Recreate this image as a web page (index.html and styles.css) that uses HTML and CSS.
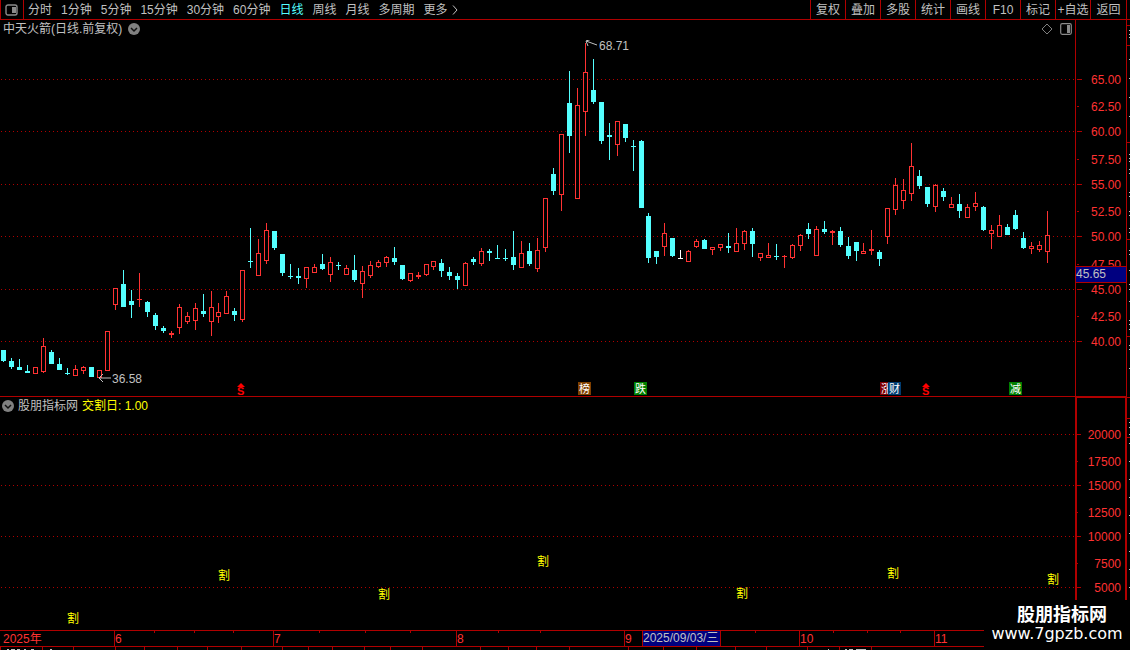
FILE: index.html
```html
<!DOCTYPE html>
<html lang="zh-CN">
<head>
    <meta charset="UTF-8">
    <meta name="viewport" content="width=device-width, initial-scale=1.0">
    <title>中天火箭 日线</title>
    <link rel="stylesheet" href="styles.css">
</head>
<body>
    <nav class="toolbar">
        <button class="layout-btn" aria-label="布局">
            <svg width="14" height="12" viewBox="0 0 14 12">
                <rect x="1" y="1" width="11" height="10" rx="2" fill="none" stroke="#8a8a8a" stroke-width="1.4"/>
                <rect x="7" y="3" width="4" height="6" fill="#8a8a8a"/>
            </svg>
        </button>
        <div class="periods">
            <button>分时</button>
            <button>1分钟</button>
            <button>5分钟</button>
            <button>15分钟</button>
            <button>30分钟</button>
            <button>60分钟</button>
            <button class="active">日线</button>
            <button>周线</button>
            <button>月线</button>
            <button>多周期</button>
            <button class="more">更多
                <svg width="6" height="10" viewBox="0 0 6 10"><path d="M1 0.5 L5 5 L1 9.5" fill="none" stroke="#c0c0c0"/></svg>
            </button>
        </div>
        <div class="tools">
            <button>复权</button>
            <button>叠加</button>
            <button>多股</button>
            <button>统计</button>
            <button>画线</button>
            <button>F10</button>
            <button>标记</button>
            <button>+自选</button>
            <button>返回</button>
        </div>
    </nav>

    <main class="workspace">
        <section class="panel price-panel">
            <div class="panel-title">
                <span>中天火箭(日线.前复权)</span>
                <button class="icon-btn" aria-label="展开">
                    <svg width="12" height="12" viewBox="0 0 12 12">
                        <circle cx="6" cy="6" r="6" fill="#808080"/>
                        <path d="M3 5 L6 8 L9 5" fill="none" stroke="#101010" stroke-width="1.5"/>
                    </svg>
                </button>
                <span class="panel-icons">
                    <svg width="12" height="12" viewBox="0 0 12 12"><path d="M6 1 L11 6 L6 11 L1 6 Z" fill="none" stroke="#808080"/></svg>
                    <svg width="12" height="12" viewBox="0 0 12 12">
                        <rect x="0.7" y="0.7" width="10.6" height="10.6" rx="1.5" fill="none" stroke="#8a8a8a" stroke-width="1.2"/>
                        <rect x="7" y="2" width="3" height="8" fill="#8a8a8a"/>
                    </svg>
                </span>
            </div>
            <svg class="chart" id="price-chart"></svg>
        </section>
        <svg class="axis" id="price-axis"></svg>

        <section class="panel signal-panel">
            <div class="panel-title">
                <button class="icon-btn" aria-label="展开">
                    <svg width="12" height="12" viewBox="0 0 12 12">
                        <circle cx="6" cy="6" r="6" fill="#808080"/>
                        <path d="M3 5 L6 8 L9 5" fill="none" stroke="#101010" stroke-width="1.5"/>
                    </svg>
                </button>
                <span>股朋指标网</span>
                <span class="signal-value">交割日: 1.00</span>
            </div>
            <svg class="chart" id="signal-chart"></svg>
        </section>
        <svg class="axis signal-axis" id="signal-axis"></svg>

        <svg class="dates" id="date-axis"></svg>
        <svg class="edge" id="edge"></svg>
    </main>

    <div class="watermark">
        <strong>股朋指标网</strong>
        <span>www.7gpzb.com</span>
    </div>

    <script>
        // Candle rows: high, body top, body bottom, low, type (u = up, d = down, f = flat)
        const candles = [
            [350,350,361,362,'d'],[358,361,367,369,'d'],[359,367,370,370,'d'],[365,371,373,373,'d'],
            [367,367,374,374,'u'],[338,346,372,373,'u'],[350,352,364,364,'d'],[358,364,370,370,'d'],
            [368,373,374,375,'d'],[365,369,376,376,'u'],[366,367,371,374,'u'],[367,367,377,377,'d'],
            [370,370,378,378,'u'],[331,331,371,371,'u'],[288,288,305,310,'u'],[270,284,307,307,'d'],
            [290,301,305,318,'d'],[273,299,300,307,'u'],[301,302,312,317,'d'],[313,315,326,330,'d'],
            [326,328,331,333,'d'],[331,333,335,338,'u'],[304,307,328,334,'u'],[312,316,322,324,'u'],
            [303,308,321,330,'u'],[294,311,314,317,'d'],[291,307,322,336,'u'],[303,312,317,323,'u'],
            [291,296,314,314,'u'],[308,311,315,321,'d'],[270,270,320,322,'u'],[228,261,262,268,'d'],
            [239,253,276,276,'u'],[223,230,261,264,'u'],[231,231,248,250,'d'],[254,254,273,276,'d'],
            [264,276,277,279,'d'],[268,276,278,284,'d'],[267,267,279,288,'u'],[264,267,273,273,'u'],
            [254,264,269,270,'d'],[257,262,275,282,'u'],[262,265,266,270,'d'],[265,268,275,275,'u'],
            [255,270,280,282,'d'],[266,271,284,298,'u'],[261,265,276,278,'u'],[260,262,267,268,'u'],
            [256,257,263,267,'u'],[247,258,262,265,'d'],[265,265,279,280,'d'],[273,273,281,282,'u'],
            [272,275,277,279,'u'],[264,264,275,276,'u'],[261,261,267,270,'u'],[259,263,271,277,'d'],
            [267,272,276,280,'d'],[273,276,280,289,'d'],[262,263,286,286,'u'],[257,259,262,265,'d'],
            [248,251,264,266,'u'],[249,251,253,261,'d'],[245,258,259,259,'d'],[249,258,259,261,'d'],
            [231,257,265,270,'d'],[241,253,268,268,'u'],[243,251,264,266,'d'],[238,250,269,272,'u'],
            [198,198,248,252,'u'],[168,174,191,195,'d'],[134,134,195,211,'u'],[71,103,136,153,'d'],
            [88,105,199,199,'u'],[43,72,112,136,'u'],[59,90,102,104,'d'],[102,102,141,144,'d'],
            [123,135,137,160,'d'],[121,121,145,156,'u'],[124,124,138,142,'d'],[140,146,147,171,'d'],
            [140,141,208,208,'d'],[213,216,258,263,'d'],[251,251,257,264,'d'],[223,233,247,256,'u'],
            [238,238,256,257,'d'],[250,258,259,259,'f'],[250,251,262,262,'u'],[239,241,247,248,'u'],
            [239,240,249,249,'d'],[247,247,250,255,'u'],[244,244,248,251,'u'],[233,246,248,253,'d'],
            [228,243,252,252,'u'],[230,231,244,250,'u'],[228,231,244,257,'d'],[253,253,258,261,'u'],
            [243,255,258,258,'u'],[244,256,257,260,'d'],[255,256,257,268,'u'],[244,245,258,259,'u'],
            [234,235,246,251,'u'],[223,229,234,239,'d'],[226,229,256,256,'u'],[221,229,232,234,'d'],
            [230,231,233,245,'u'],[227,231,245,247,'d'],[237,246,256,259,'d'],[242,242,251,261,'d'],
            [243,251,254,254,'u'],[230,249,251,255,'u'],[250,252,259,266,'d'],[208,208,237,244,'u'],
            [178,185,210,215,'u'],[179,190,201,209,'u'],[143,166,194,201,'u'],[170,176,186,189,'d'],
            [187,187,204,207,'d'],[184,185,207,212,'u'],[188,191,197,201,'d'],[197,204,208,208,'u'],
            [194,204,211,218,'d'],[204,207,218,218,'u'],[192,203,207,211,'u'],[206,207,230,231,'d'],
            [225,230,234,249,'u'],[215,225,237,237,'u'],[224,227,235,235,'d'],[210,215,229,230,'d'],
            [232,238,248,249,'d'],[242,246,249,254,'u'],[241,245,250,252,'u'],[211,235,252,263,'u']
        ];

        const colors = { u: '#ff3232', d: '#54ffff', f: '#ffffff' };

        const rect = (x, y, w, h, fill) =>
            `<rect x="${x}" y="${y}" width="${w}" height="${h}" fill="${fill}"/>`;
        const text = (x, y, str, cls) => `<text x="${x}" y="${y}" class="${cls}">${str}</text>`;

        // Dotted grid lines
        function grid(rows, id) {
            let out = `<defs><pattern id="${id}" width="4" height="1" patternUnits="userSpaceOnUse">${rect(1, 0, 1, 1, '#b00000')}</pattern></defs>`;
            rows.forEach(y => out += `<rect x="0" y="${y}" width="100%" height="1" fill="url(#${id})"/>`);
            return out;
        }

        function candle(row, i) {
            const [high, top, bottom, low, type] = row;
            const x = 1 + i * 8 - Math.floor(i / 27);
            const c = colors[type];
            let out = rect(x + 2, high, 1, low - high, c);
            out += rect(x, top, 5, bottom - top, c);
            if (type === 'u' && bottom - top > 2) {
                out += rect(x + 1, top + 1, 3, bottom - top - 2, '#000');
            }
            return out;
        }

        function badge(x, str, fill) {
            return rect(x, 382, 13, 13, fill) + text(x + 1, 393, str, 'badge');
        }

        function dividend(x) {
            return `<path d="M${x} 387 l4 -4 l4 4 z" fill="#f00"/>` + text(x, 395, 'S', 'dividend');
        }

        function put(id, top, content) {
            document.getElementById(id).innerHTML = `<g transform="translate(0 ${-top})">${content}</g>`;
        }

        // Price chart
        put('price-chart', 40,
            grid([79, 131, 184, 236, 289, 341], 'dots-a') +
            candles.map(candle).join('') +
            '<path d="M597 45 L586 41 M592 39 L586 41 L588 46" class="arrow"/>' + text(599, 50, '68.71', 'note') +
            '<path d="M111 378 L99 378 M103 374 L99 378 L103 382" class="arrow"/>' + text(112, 383, '36.58', 'note') +
            dividend(237) + badge(578, '榜', '#804000') + badge(634, '跌', '#008000') +
            badge(880, '涨', '#800000') + badge(888, '财', '#003c70') + dividend(922) + badge(1009, '减', '#008000')
        );

        // Price axis
        const prices = [['65.00', 79], ['62.50', 106], ['60.00', 131], ['57.50', 159], ['55.00', 184],
            ['52.50', 211], ['50.00', 236], ['47.50', 264], ['45.00', 289], ['42.50', 316], ['40.00', 341]];
        put('price-axis', 20,
            prices.map((p, i) => rect(1, p[1], i % 2 ? 2 : 5, 1, '#b00000') + text(45, p[1] + 5, p[0], 'tick')).join('') +
            rect(0, 266, 51, 17, '#b00000') + rect(0, 267, 50, 15, '#000080') + text(0, 278, '45.65', 'note')
        );

        // Settlement signals
        const signals = [[67, 618], [218, 575], [378, 594], [537, 561], [736, 593], [887, 573], [1047, 579]];
        put('signal-chart', 415,
            grid([434, 485, 536, 587], 'dots-b') +
            signals.map(s => text(s[0], s[1] + 5, '割', 'signal')).join('')
        );

        const levels = [['20000', 434], ['17500', 461], ['15000', 485], ['12500', 512], ['10000', 536], ['7500', 563], ['5000', 587]];
        put('signal-axis', 398,
            levels.map((p, i) => rect(0, p[1], i % 2 ? 1 : 4, 1, '#b00000') + text(44, p[1] + 5, p[0], 'tick')).join('')
        );

        // Date axis
        const months = [[114, '6'], [273, '7'], [456, '8'], [624, '9'], [799, '10'], [934, '11']];
        const weeks = [154, 194, 233, 319, 365, 410, 498, 540, 755, 833, 867, 900];
        const cells = [0, 42, 73, 115, 144, 177, 207, 241, 282, 308, 332, 364, 390, 422, 480, 508, 536, 569, 628, 663, 696, 735, 766, 807, 839, 871];
        const bits = [[7, 2], [11, 4], [17, 3], [24, 2], [31, 3], [50, 2], [828, 1], [845, 2], [849, 4], [856, 10]];
        put('date-axis', 630,
            text(3, 643, '2025年', 'date') +
            months.map(m => rect(m[0], 630, 1, 17, '#b00000') + text(m[0] + 1, 643, m[1], 'date')).join('') +
            weeks.map(x => rect(x, 631, 1, 2, '#b00000')).join('') +
            rect(642, 630, 79, 17, '#b00000') + rect(643, 631, 77, 15, '#000080') + text(643, 642, '2025/09/03/三', 'note') +
            '<rect x="0" y="630" width="100%" height="1" fill="#b00000"/><rect x="0" y="646" width="100%" height="1" fill="#b00000"/>' +
            cells.map(x => rect(x, 647, 1, 3, '#b00000')).join('') +
            bits.map(b => rect(b[0], 649, b[1], 1, '#c0c0c0')).join('')
        );

        // Slice of the neighbouring quote list
        const rows = [25, 45, 142, 239, 336, 397, 418, 437];
        const quotes = [30, 34, 37, 59, 78, 97, 116, 154, 158, 161, 169, 173, 192, 196, 211, 215, 228, 232, 250, 254,
            270, 284, 289, 301, 320, 324, 329, 345, 349, 368, 422, 427, 434, 443, 461, 479, 497, 515, 533, 551, 569, 587];
        put('edge', 20,
            rows.map(y => rect(0, y, 3, 1, '#b00000')).join('') +
            quotes.map(y => rect(2, y, 1, 1, '#c0c0c0')).join('')
        );
    </script>
</body>
</html>
```
FILE: styles.css
```css
* {
    margin: 0;
    padding: 0;
    box-sizing: border-box;
}

body {
    background-color: #000;
    color: #c0c0c0;
    font-family: "Liberation Sans", "Noto Sans CJK SC", sans-serif;
    font-size: 12px;
    line-height: 18px;
    overflow: hidden;
}

button {
    background: none;
    border: none;
    color: inherit;
    font: inherit;
    white-space: nowrap;
    cursor: pointer;
}

svg {
    display: block;
}

/* Toolbar */
.toolbar {
    display: flex;
    height: 20px;
    border-bottom: 1px solid #b00000;
}

.layout-btn {
    width: 24px;
    padding-left: 4px;
    border-left: 1px solid #b00000;
    border-right: 1px solid #b00000;
}

.periods {
    display: flex;
    gap: 9px;
    padding-left: 4px;
}

.periods .active {
    color: #54ffff;
}

.more {
    display: flex;
    align-items: center;
    gap: 4px;
}

.tools {
    display: flex;
    margin-left: auto;
    margin-right: 3px;
    border-right: 1px solid #b00000;
}

.tools button {
    width: 35px;
    border-left: 1px solid #b00000;
}

.tools button:last-child {
    width: 36px;
}

/* Charts */
.workspace {
    display: grid;
    grid-template-columns: 1fr 52px 3px;
}

.panel-title {
    display: flex;
    align-items: center;
    gap: 6px;
    height: 18px;
    padding-left: 3px;
}

.panel-icons {
    display: flex;
    gap: 7px;
    margin-left: auto;
    padding-right: 3px;
}

.price-panel .panel-title {
    margin-bottom: 2px;
}

.chart {
    width: 100%;
    height: 356px;
}

.axis {
    width: 100%;
    height: 100%;
    border-left: 1px solid #b00000;
    border-right: 1px solid #b00000;
}

.signal-panel {
    border-top: 1px solid #b00000;
}

.signal-panel .panel-title {
    padding-left: 2px;
    gap: 4px;
}

.signal-panel .chart {
    height: 215px;
}

.signal-value,
.signal {
    color: #ffff00;
    fill: #ffff00;
}

.signal-axis {
    border: 2px solid #b00000;
    border-bottom: none;
}

.dates {
    grid-column: 1 / 3;
    width: 100%;
    height: 20px;
}

.edge {
    grid-column: 3;
    grid-row: 1 / 4;
    width: 3px;
    height: 100%;
}

.note {
    fill: #c0c0c0;
}

.arrow {
    fill: none;
    stroke: #c0c0c0;
}

.tick {
    fill: #ff3232;
    text-anchor: end;
}

.date {
    fill: #ff3232;
}

.badge {
    fill: #ffffff;
    font-size: 11px;
}

.dividend {
    fill: #ff0000;
    font-size: 11px;
    font-weight: bold;
}

.watermark {
    position: absolute;
    right: 0;
    bottom: 0;
    display: flex;
    flex-direction: column;
    align-items: center;
    width: 146px;
    height: 50px;
    padding-top: 5px;
    background-color: #000;
    color: #fff;
}

.watermark strong {
    margin-left: 10px;
    font-size: 18px;
    line-height: 20px;
}

.watermark span {
    font-family: "DejaVu Sans", sans-serif;
    font-size: 16px;
}
```
